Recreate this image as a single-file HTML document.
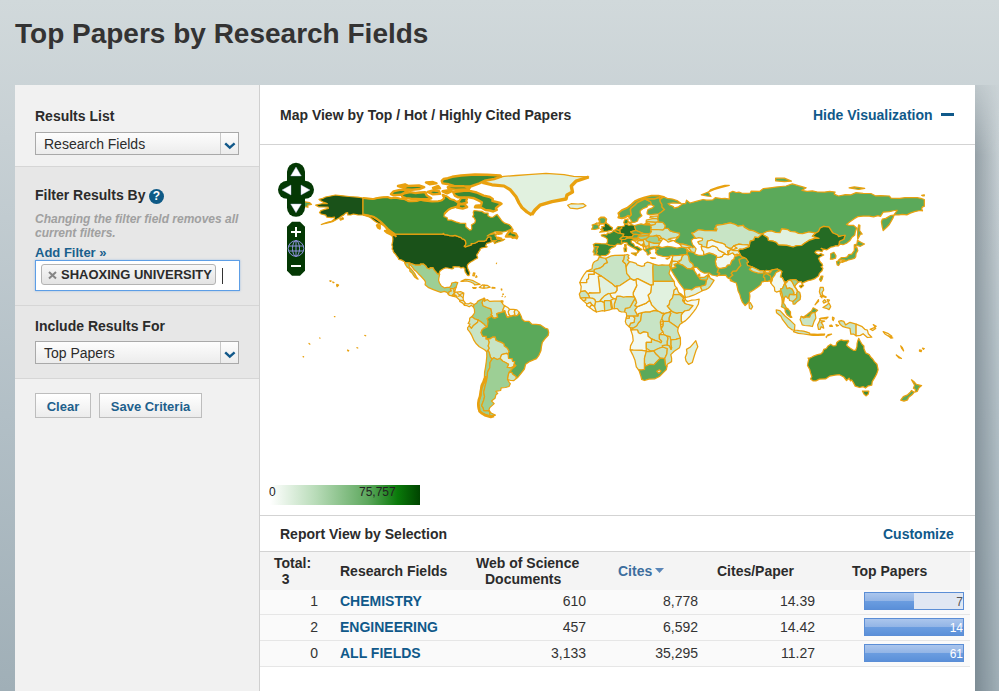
<!DOCTYPE html>
<html><head><meta charset="utf-8">
<style>
*{box-sizing:border-box;margin:0;padding:0}
html,body{width:999px;height:691px;overflow:hidden}
body{font-family:"Liberation Sans",sans-serif;color:#333;position:relative;
background:linear-gradient(180deg,#d1d9db 0%,#c7d0d4 20%,#b2bfc6 60%,#a0afb7 100%);}
.a{position:absolute;white-space:nowrap}
.b14{font:bold 14px/16px "Liberation Sans",sans-serif;color:#2b2b2b}
.r14{font:14px/16px "Liberation Sans",sans-serif;color:#333}
.lnk{color:#10598a}
.sel{position:absolute;width:204px;height:23px;border:1px solid #a9a9a9;
background:linear-gradient(#fdfdfd,#ececec)}
.sel span{position:absolute;left:8px;top:3px;font:14px/16px "Liberation Sans",sans-serif;color:#2b2b2b}
.sel i{position:absolute;left:184px;top:0;width:1px;height:21px;background:#c8c8c8}
.sel svg{position:absolute;left:188px;top:9px}
.btn{position:absolute;top:393px;height:25px;border:1px solid #bdbdbd;background:linear-gradient(#ffffff,#ececec);
font:bold 13px/16px "Liberation Sans",sans-serif;color:#1d5f8c;text-align:center;padding-top:5px}
.hl{position:absolute;left:260px;width:715px;height:1px;background:#d3d3d3}
.row{position:absolute;left:260px;width:710px;height:26px;background:#fafafa;border-bottom:1px solid #e6e6e6}
.num{position:absolute;text-align:right;width:120px;font:14px/16px "Liberation Sans",sans-serif;color:#333}
.bar{position:absolute;left:864px;width:100px;height:18px;border:1px solid #5b8ed6;background:#e0e7f3;overflow:hidden}
.bar b{position:absolute;left:0;top:0;bottom:0;background:linear-gradient(#abc6ed 0%,#93b5e6 48%,#6b9de0 50%,#5b90d9 100%)}
.bar span{position:absolute;right:0px;top:2px;font:12px/14px "Liberation Sans",sans-serif}
</style></head><body>
<div class="a" style="left:15px;top:18px;font:bold 28px/31px 'Liberation Sans',sans-serif;color:#333">Top Papers by Research Fields</div>
<div class="a" style="left:975px;top:85px;width:24px;height:606px;background:linear-gradient(90deg,rgba(60,75,85,.35),rgba(60,75,85,0) 100%);-webkit-mask-image:linear-gradient(180deg,rgba(0,0,0,.25) 0px,#000 70px)"></div>
<!-- sidebar -->
<div class="a" style="left:15px;top:85px;width:245px;height:606px;background:#f1f1f1;border-right:1px solid #d0d0d0"></div>
<div class="a" style="left:15px;top:166px;width:244px;height:1px;background:#d6d6d6"></div>
<div class="a" style="left:15px;top:167px;width:244px;height:138px;background:#e7e7e7"></div>
<div class="a" style="left:15px;top:305px;width:244px;height:1px;background:#d6d6d6"></div>
<div class="a" style="left:15px;top:306px;width:244px;height:72px;background:#e7e7e7"></div>
<div class="a" style="left:15px;top:378px;width:244px;height:1px;background:#d6d6d6"></div>

<div class="a b14" style="left:35px;top:108px">Results List</div>
<div class="sel" style="left:35px;top:132px"><span>Research Fields</span><i></i>
  <svg width="13" height="8" viewBox="0 0 13 8"><path d="M1.2 1.3 L5.8 5.6 L10.6 1.3" fill="none" stroke="#12598a" stroke-width="2.4"/></svg></div>

<div class="a b14" style="left:35px;top:187px">Filter Results By</div>
<div class="a" style="left:149px;top:189px;width:15px;height:15px;border-radius:50%;background:#0f5a86;color:#fff;font:bold 12px/15px 'Liberation Sans',sans-serif;text-align:center">?</div>
<div class="a" style="left:35px;top:212px;font:italic bold 12px/14px 'Liberation Sans',sans-serif;color:#a0a0a0">Changing the filter field removes all<br>current filters.</div>
<div class="a lnk" style="left:35px;top:245px;font:bold 13px/16px 'Liberation Sans',sans-serif;color:#19608d">Add Filter &raquo;</div>
<div class="a" style="left:35px;top:260px;width:205px;height:31px;border:1px solid #5d9ee6;background:#fff;box-shadow:0 0 2px rgba(90,150,220,.5)">
  <div class="a" style="left:5px;top:3px;width:175px;height:21px;border:1px solid #b3b3b3;border-radius:3px;background:linear-gradient(#f8f8f8,#e3e3e3)">
    <svg class="a" style="left:6px;top:6px" width="9" height="9"><path d="M1 1L8 7.5M8 1L1 7.5" stroke="#858585" stroke-width="2"/></svg>
    <span class="a" style="left:19px;top:2px;font:bold 13px/16px 'Liberation Sans',sans-serif;color:#2b2b2b">SHAOXING UNIVERSITY</span>
  </div>
  <div class="a" style="left:186px;top:7px;width:1px;height:16px;background:#333"></div>
</div>

<div class="a b14" style="left:35px;top:318px">Include Results For</div>
<div class="sel" style="left:35px;top:341px"><span>Top Papers</span><i></i>
  <svg width="13" height="8" viewBox="0 0 13 8"><path d="M1.2 1.3 L5.8 5.6 L10.6 1.3" fill="none" stroke="#12598a" stroke-width="2.4"/></svg></div>

<div class="btn" style="left:35px;width:56px">Clear</div>
<div class="btn" style="left:99px;width:103px">Save Criteria</div>

<!-- main panel -->
<div class="a" style="left:260px;top:85px;width:715px;height:606px;background:#fff"></div>
<div class="a b14" style="left:280px;top:107px">Map View by Top / Hot / Highly Cited Papers</div>
<div class="a b14 lnk" style="left:813px;top:107px">Hide Visualization</div>
<div class="a" style="left:941px;top:113px;width:13px;height:3px;background:#10598a"></div>
<div class="hl" style="top:144px"></div>
<div id="map" class="a" style="left:260px;top:145px;width:715px;height:370px"><svg width="715" height="370" style="position:absolute;left:0;top:0"><g stroke="#e9a10f" stroke-width="1.25" stroke-linejoin="round"><path fill="#e1f1df" stroke-width="1.3" d="M222.4 37.4 230.0 34.0 244.0 31.4 256.0 30.5 268.0 29.6 286.0 28.4 304.0 29.6 313.7 31.4 328.7 32.0 316.0 36.2 311.3 41.0 312.5 47.0 307.0 50.0 306.0 54.0 292.0 56.6 280.0 60.2 275.0 65.0 271.7 69.8 267.0 67.0 262.0 62.6 259.0 58.0 256.0 51.8 250.0 44.6 244.0 41.0 232.0 39.8Z"/><path fill="#1a5219" d="M131.5 90.1 134.2 90.5 134.9 89.1 183.1 89.1 183.1 88.4 183.8 88.6 184.2 89.6 187.0 89.8 189.6 90.7 192.9 90.8 195.0 90.3 201.1 92.7 201.7 93.4 202.5 94.0 203.4 94.1 205.3 95.5 206.0 98.5 205.3 100.3 204.3 101.3 205.5 101.8 207.9 101.0 210.0 100.4 211.6 99.7 211.1 98.7 214.1 98.5 216.3 97.5 217.9 96.4 219.0 96.1 224.6 96.1 225.3 95.5 226.0 95.4 226.8 93.8 227.2 93.1 228.6 91.9 230.3 92.0 231.0 92.4 231.0 94.8 232.2 95.9 232.4 96.4 230.7 97.1 228.9 97.8 226.8 98.3 226.1 99.7 225.6 100.8 227.2 101.7 226.3 102.2 223.9 102.5 221.1 103.2 220.2 103.8 220.0 105.2 218.6 106.7 218.3 107.8 216.9 109.5 216.7 110.2 217.6 112.5 217.4 113.2 215.1 114.2 213.4 115.5 211.1 116.7 209.3 117.9 207.6 119.7 207.2 121.4 207.9 123.7 208.8 125.8 209.7 128.0 209.3 130.0 208.6 130.7 207.6 130.5 206.5 128.9 205.2 126.8 204.8 125.1 205.0 123.7 203.1 122.3 201.0 123.0 199.2 121.8 196.6 121.8 194.8 121.6 192.9 121.9 193.6 123.5 192.0 123.9 189.6 123.5 187.8 123.0 185.6 122.8 183.8 123.5 181.7 124.7 180.0 126.1 179.3 127.5 179.6 129.4 177.4 128.9 175.6 126.6 174.2 125.1 173.0 122.8 170.5 122.6 169.3 124.0 166.9 123.0 166.0 121.2 163.4 119.1 160.4 119.1 160.4 120.0 155.3 120.0 148.9 117.9 144.8 117.9 144.5 116.7 142.6 115.6 141.2 114.9 138.7 114.4 138.2 112.8 136.4 110.7 135.4 109.0 134.5 108.3 133.3 106.7 133.1 105.2 132.1 104.1 132.6 101.7 131.9 99.9 132.6 96.9 132.9 94.0 132.6 92.0Z"/><path fill="#1a5219" d="M103.0 53.0 97.8 52.2 89.1 51.5 82.9 50.8 75.4 50.0 70.7 51.0 65.5 52.0 62.8 53.4 59.0 54.3 60.2 55.5 63.2 57.1 67.2 58.7 62.8 58.5 55.7 60.1 58.5 61.8 64.6 62.0 68.1 62.2 68.4 63.4 64.6 64.4 61.1 65.5 59.5 67.6 61.1 69.0 65.8 70.2 66.7 72.1 71.6 72.7 74.6 72.1 74.2 74.2 71.6 76.3 68.1 77.0 63.7 78.6 61.3 79.5 65.5 78.4 69.8 77.4 73.3 76.3 76.0 74.7 79.4 72.8 81.2 71.4 83.8 69.9 85.6 68.1 87.7 67.6 87.8 70.0 90.8 69.9 93.4 69.0 97.8 69.9 102.4 70.0 105.1 70.6 109.2 72.0 110.9 73.0 112.7 74.4 115.3 76.5 118.8 78.6 120.9 79.1 121.9 78.1 119.7 76.3 117.0 74.0 113.9 72.0 110.9 70.9 107.4 70.0 103.0 69.3ZM80.5 75.1 83.5 74.0 82.9 72.7 79.8 74.0Z"/><path fill="#3b8a37" d="M103.0 53.0 108.3 53.6 112.7 54.1 116.2 53.3 120.5 52.6 124.0 52.2 127.5 52.0 131.0 53.3 135.4 52.7 139.8 53.6 145.0 54.3 148.5 56.2 152.0 56.2 157.2 55.9 160.7 54.7 163.4 55.5 167.7 55.9 172.1 56.4 178.2 56.2 181.7 55.4 184.3 53.3 182.6 49.8 187.0 51.5 190.5 54.1 194.0 55.0 196.6 56.8 199.2 55.9 201.0 53.3 204.5 52.7 207.1 54.1 206.2 55.9 207.1 57.6 201.8 58.8 198.3 58.1 199.2 61.1 195.7 62.0 191.3 63.2 188.7 64.6 186.1 66.9 184.3 69.0 184.0 71.6 187.0 72.5 187.8 75.1 191.3 75.1 195.7 76.8 200.1 78.2 205.7 78.4 205.8 81.7 207.9 83.5 209.7 85.1 211.4 84.7 211.8 83.0 211.4 80.0 214.9 77.7 215.5 75.4 214.1 72.8 212.7 71.8 213.7 69.5 213.2 67.2 214.1 65.5 218.4 66.0 221.9 66.4 224.6 68.1 228.1 68.1 227.9 70.7 230.7 72.3 233.3 72.0 235.9 70.0 237.1 69.5 239.4 72.5 242.0 76.0 244.7 78.2 249.0 79.5 251.7 82.1 252.0 83.8 249.6 84.9 245.5 86.5 242.9 87.0 238.5 86.8 235.0 86.8 232.4 88.2 229.8 89.3 227.2 91.0 228.9 90.0 234.2 88.7 237.1 89.4 235.0 90.7 236.3 91.7 236.8 93.8 241.2 94.7 244.7 94.3 243.1 95.5 238.5 96.8 234.7 98.5 233.8 96.9 236.8 95.5 234.2 95.7 232.2 95.9 231.0 94.8 231.0 92.4 230.3 92.0 228.6 91.9 227.2 93.1 226.8 93.8 226.0 95.4 225.3 95.5 224.6 96.1 219.0 96.1 217.9 96.4 216.3 97.5 214.1 98.5 211.1 98.7 211.6 99.7 210.0 100.4 207.9 101.0 205.5 101.8 204.3 101.3 205.3 100.3 206.0 98.5 205.3 95.5 203.4 94.1 202.5 94.0 201.7 93.4 201.1 92.7 195.0 90.3 192.9 90.8 189.6 90.7 187.0 89.8 184.2 89.6 183.8 88.6 183.1 88.4 183.1 89.1 134.9 89.1 134.2 88.2 131.4 86.8 130.1 85.8 127.2 85.6 126.1 83.3 124.4 81.2 122.3 79.8 120.9 79.1 121.9 78.1 119.7 76.3 117.0 74.0 113.9 72.0 110.9 70.9 107.4 70.0 103.0 69.3Z"/><path fill="#3b8a37" stroke-width="2.4" d="M209.7 45.9 216.7 47.5 223.7 50.6 229.8 52.0 232.8 54.1 232.4 55.9 240.3 58.0 241.5 58.8 239.4 60.2 235.9 63.2 236.8 65.0 233.3 66.5 229.8 65.5 225.4 65.0 221.1 62.5 214.9 62.3 215.8 60.6 221.1 60.2 221.9 57.3 218.4 55.4 214.1 53.3 208.8 52.4 204.5 52.4 198.3 52.4 194.8 50.6 193.1 47.1 200.1 46.3 203.6 45.7ZM141.5 49.8 144.1 48.4 150.3 47.1 155.5 48.0 159.9 47.5 165.1 47.1 166.9 50.6 171.2 53.3 167.7 54.3 160.7 54.3 151.1 53.8 145.9 53.1 142.4 51.9ZM131.0 49.1 133.6 46.3 139.8 44.9 144.1 44.9 147.6 46.3 140.6 49.8 133.6 50.3ZM210.6 41.5 219.3 38.4 224.6 35.8 234.2 34.0 241.2 31.6 240.3 30.5 227.2 29.8 214.9 29.5 201.0 30.5 192.2 31.8 187.8 33.2 183.5 34.0 181.7 35.8 182.6 38.4 188.7 39.3 194.0 41.0 204.5 41.4ZM188.7 44.0 195.7 44.7 208.8 44.3 209.7 42.8 203.6 41.2 192.2 41.0 187.8 42.2ZM143.3 42.8 147.6 41.0 159.0 40.5 164.2 42.1 159.9 44.0 152.0 44.7 144.1 44.2ZM167.7 46.8 173.0 45.4 179.1 46.3 180.0 48.9 173.0 49.4ZM182.6 46.3 188.7 45.2 191.3 46.3 187.0 48.4ZM198.3 59.4 204.5 59.0 207.1 62.0 202.7 63.6 197.1 62.5ZM138.0 41.0 145.0 39.3 147.6 40.5 141.5 42.2ZM173.0 42.8 178.2 41.0 180.0 43.3 174.7 43.6ZM166.0 37.5 173.0 37.0 176.5 38.4 169.5 39.3ZM245.9 91.5 247.3 89.1 249.4 86.3 252.5 84.5 251.7 87.3 255.7 88.6 257.4 91.5 256.7 93.3 255.2 92.4 252.5 92.7 251.1 91.5ZM125.1 85.9 130.1 86.8 134.0 90.1 131.4 89.6 126.7 87.3ZM117.0 80.3 119.7 80.5 119.7 83.5 117.9 82.4ZM237.7 92.7 241.2 93.6 238.5 94.0ZM236.8 87.5 241.5 88.4 238.5 88.7Z"/><path fill="none" stroke-width="2.0" d="M103.0 53.0 108.3 53.6 112.7 54.1 116.2 53.3 120.5 52.6 124.0 52.2 127.5 52.0 131.0 53.3 135.4 52.7 139.8 53.6 145.0 54.3 148.5 56.2 152.0 56.2 157.2 55.9 160.7 54.7 163.4 55.5 167.7 55.9 172.1 56.4 178.2 56.2 181.7 55.4 184.3 53.3 182.6 49.8 187.0 51.5 190.5 54.1 194.0 55.0 196.6 56.8 199.2 55.9 201.0 53.3 204.5 52.7 207.1 54.1 206.2 55.9 207.1 57.6 201.8 58.8 198.3 58.1 199.2 61.1 195.7 62.0 191.3 63.2 188.7 64.6 186.1 66.9 184.3 69.0"/><path fill="#e1f1df" d="M307.6 60.2 311.1 58.7 318.1 59.0 323.3 58.7 326.0 60.8 323.3 62.3 317.2 63.9 310.2 63.2Z"/><path fill="#9dcf95" d="M144.8 117.9 148.9 117.9 155.3 120.0 160.4 120.0 160.4 119.1 163.4 119.1 166.0 121.2 166.9 123.0 169.3 124.0 170.5 122.6 173.0 122.8 174.2 125.1 175.6 126.6 177.4 128.9 179.6 129.4 178.9 132.8 178.6 135.4 179.5 138.0 181.4 141.0 183.5 142.2 184.3 142.9 187.3 142.4 189.6 142.4 191.3 140.1 191.7 138.0 195.7 137.1 197.8 137.5 196.6 140.6 196.1 142.9 195.2 142.4 193.8 143.6 190.5 143.6 190.5 144.6 191.5 146.0 189.2 146.7 188.4 149.4 187.0 147.4 184.3 146.4 180.8 147.3 177.4 146.2 173.3 144.6 168.6 142.7 165.1 139.8 165.5 136.8 164.2 134.9 160.7 131.0 158.3 128.7 156.4 126.6 154.1 124.7 152.4 122.3 150.3 120.0 148.9 119.3 149.4 122.3 151.1 124.0 152.9 126.1 154.6 128.4 156.4 131.9 158.1 134.2 156.7 133.6 154.6 131.9 153.4 130.1 152.0 128.0 149.9 126.3 149.7 124.0 147.3 122.3 145.5 119.7Z"/><path fill="#c8e4c5" d="M188.4 149.4 189.2 146.7 191.5 146.0 190.5 144.6 190.5 143.6 193.8 143.6 194.1 146.9 195.4 147.3 193.4 149.4 192.0 150.8 189.6 150.4Z"/><path fill="#e1f1df" d="M193.8 143.6 195.2 142.4 195.4 145.0 194.1 146.9Z"/><path fill="#e1f1df" d="M194.1 146.9 196.6 147.1 201.0 146.7 203.8 148.1 203.1 152.9 203.4 155.5 205.8 158.6 208.8 158.8 210.6 157.9 214.2 159.5 213.4 162.1 211.4 160.2 209.2 161.8 207.1 160.7 204.6 160.5 202.7 158.1 199.7 156.4 199.6 155.1 196.6 152.2 194.8 151.6 192.6 151.1 192.0 150.8 193.4 149.4 195.4 147.3Z"/><path fill="none" d="M193.4 149.4 196.1 150.4 196.6 152.2M192.6 151.1 194.8 150.2 196.1 150.4M203.1 152.9 200.6 150.6 197.5 151.5M199.7 155.1 203.2 155.7M204.6 160.5 204.8 158.1M196.6 147.1 199.2 149.9 201.8 148.7 203.9 148.7"/><path fill="#c8e4c5" d="M201.0 136.4 205.3 134.3 208.8 134.5 213.2 135.7 217.4 138.0 220.0 139.4 214.6 139.9 213.7 138.5 210.6 137.0 206.5 135.9 202.7 136.4Z"/><path fill="#f2f9f1" d="M219.3 142.5 222.3 139.9 224.2 140.1 224.0 143.1 222.3 143.1Z"/><path fill="#e1f1df" d="M224.2 140.1 227.2 140.3 230.2 142.2 227.2 142.9 224.0 143.1Z"/><path fill="#e1f1df" d="M212.7 142.5 216.2 142.7 215.3 143.4 213.5 143.4Z"/><path fill="#e1f1df" d="M232.1 142.4 234.9 142.5 234.9 143.2 232.1 143.2Z"/><path fill="#f2f9f1" d="M213.5 127.9 214.9 128.2 214.1 131.0 212.8 130.7ZM216.3 130.7 217.0 131.9 215.8 132.4Z"/><path fill="#1a5219" d="M76.8 139.4 78.6 140.1 77.2 141.7 76.7 140.5ZM72.8 137.0 74.0 137.5 73.2 137.5ZM69.8 135.9 71.1 135.9 70.7 136.4Z"/><path fill="#9dcf95" d="M214.2 159.5 216.7 158.1 217.6 156.4 219.8 155.1 222.8 153.9 224.2 153.0 224.9 154.1 223.2 155.3 222.1 157.6 223.0 160.7 227.0 162.5 231.0 163.9 231.9 168.6 231.0 169.8 232.4 170.9 228.4 173.0 227.2 173.8 228.1 176.4 227.2 182.0 225.8 181.3 223.7 178.9 220.9 176.8 218.1 174.9 214.9 174.0 211.8 171.6 213.2 170.0 214.6 167.7 214.4 164.2 213.4 162.1Z"/><path fill="#c8e4c5" d="M224.9 154.1 224.4 156.4 225.4 155.5 227.2 154.6 229.8 156.4 234.2 156.2 237.7 156.2 241.2 156.0 242.0 157.6 243.3 159.8 244.7 160.7 243.8 162.8 242.9 165.1 243.4 166.8 240.3 167.7 236.8 168.6 237.7 172.1 235.0 173.3 232.6 172.6 232.4 170.9 231.0 169.8 231.9 168.6 231.0 163.9 227.0 162.5 223.0 160.7 222.1 157.6 223.2 155.3Z"/><path fill="#f2f9f1" d="M244.7 160.7 248.2 162.8 249.6 164.4 248.3 166.8 249.0 169.5 250.8 171.4 247.3 172.4 245.5 168.6 244.7 165.6 243.4 166.8 242.9 165.1 243.8 162.8Z"/><path fill="#f2f9f1" d="M249.6 164.4 253.4 164.4 255.2 164.7 254.3 166.8 255.2 171.0 253.4 170.3 250.8 171.4 249.0 169.5 248.3 166.8Z"/><path fill="#e1f1df" d="M255.2 164.7 256.9 164.9 259.3 167.4 257.8 170.3 255.2 171.0 254.3 166.8Z"/><path fill="#c8e4c5" d="M209.7 173.3 209.5 176.1 208.1 178.5 210.0 179.1 209.2 180.8 211.4 183.4 213.2 180.8 217.6 177.3 218.1 174.9 214.9 174.0 211.8 171.6Z"/><path fill="#c8e4c5" d="M209.2 180.8 207.6 182.6 207.6 184.3 209.7 186.9 211.8 190.4 214.1 195.7 216.3 198.8 219.3 201.8 224.6 204.8 226.7 206.7 228.1 205.3 229.3 203.2 228.2 200.9 229.3 197.1 227.9 193.9 226.1 193.9 226.3 191.3 222.8 191.3 221.1 187.8 221.9 185.2 223.7 183.4 227.2 182.0 225.8 181.3 223.7 178.9 220.9 176.8 218.1 174.9 217.6 177.3 213.2 180.8 211.4 183.4Z"/><path fill="#5ba95a" d="M259.3 167.4 261.3 171.6 262.1 174.2 264.8 176.4 269.1 176.4 271.8 179.1 276.1 179.4 280.5 179.9 284.9 183.1 287.8 184.0 288.7 187.3 288.2 190.4 284.9 193.9 282.3 197.4 281.4 201.8 280.9 205.8 278.8 210.5 276.5 213.7 273.5 214.9 270.0 216.3 265.6 219.3 264.4 224.0 261.3 228.0 257.8 232.4 256.2 233.6 256.0 231.5 252.5 228.9 251.7 227.3 248.9 227.5 252.2 223.6 254.1 222.1 255.7 220.5 254.1 219.3 254.6 216.6 252.5 216.5 252.0 213.7 248.5 213.3 248.2 209.6 247.8 209.3 249.0 206.2 247.3 203.2 244.3 201.1 243.8 198.8 241.2 197.4 238.5 196.5 235.9 195.3 235.2 192.2 232.9 192.0 229.8 193.9 226.1 193.9 226.3 191.3 222.8 191.3 221.1 187.8 221.9 185.2 223.7 183.4 227.2 182.0 228.1 176.4 227.2 173.8 228.4 173.0 232.4 170.9 232.6 172.6 235.0 173.3 237.7 172.1 236.8 168.6 240.3 167.7 243.4 166.8 244.7 165.6 245.5 168.6 247.3 172.4 250.8 171.4 253.4 170.3 255.2 171.0 257.8 170.3Z"/><path fill="#c8e4c5" d="M227.9 193.9 229.8 193.9 232.9 192.0 235.2 192.2 235.9 195.3 238.5 196.5 241.2 197.4 243.8 198.8 244.3 201.1 247.3 203.2 249.0 206.2 247.8 209.3 246.4 208.4 241.7 209.6 240.1 213.5 237.1 214.5 233.8 212.8 232.1 214.2 230.3 212.1 229.3 207.9 228.1 205.3 229.3 203.2 228.2 200.9 229.3 197.1Z"/><path fill="#e1f1df" d="M247.8 209.3 248.2 209.6 248.5 213.3 252.0 213.7 252.5 216.5 254.6 216.6 254.1 219.3 253.8 221.5 250.8 222.8 247.1 222.4 248.5 219.3 245.5 217.5 242.9 216.3 240.1 213.5 241.7 209.6 246.4 208.4Z"/><path fill="#c8e4c5" d="M256.2 233.6 253.6 235.7 250.8 235.5 247.5 234.5 247.8 231.5 248.9 227.5 251.7 227.3 252.5 228.9 256.0 231.5Z"/><path fill="#9dcf95" d="M226.7 206.7 226.8 211.4 226.3 216.6 225.4 222.8 224.6 227.1 224.4 232.4 222.8 236.7 221.1 240.2 220.5 246.3 221.1 249.8 219.3 255.1 217.6 259.4 218.4 264.7 221.1 267.3 225.4 269.4 229.8 270.8 232.4 271.2 229.6 266.6 228.1 265.6 223.9 265.6 223.2 262.9 221.6 260.7 223.7 255.1 224.6 251.6 223.7 247.2 225.1 241.1 226.3 236.7 227.2 232.4 227.5 227.1 229.8 222.8 230.0 217.5 232.1 214.2 230.3 212.1 229.3 207.9 228.1 205.3Z"/><path fill="#9dcf95" d="M232.1 214.2 233.8 212.8 237.1 214.5 240.1 213.5 242.9 216.3 245.5 217.5 248.5 219.3 247.1 222.4 250.8 222.8 253.8 221.5 254.1 219.3 255.7 220.5 254.1 222.1 252.2 223.6 248.9 227.5 247.8 231.5 247.5 234.5 249.4 237.6 250.3 238.7 249.0 241.5 245.5 242.5 241.2 242.8 240.6 245.5 235.9 246.3 237.7 248.6 235.9 249.8 235.0 253.3 231.5 256.0 234.2 258.6 229.8 262.6 228.9 264.9 229.8 266.4 229.6 266.6 228.1 265.6 223.9 265.6 223.2 262.9 221.6 260.7 223.7 255.1 224.6 251.6 223.7 247.2 225.1 241.1 226.3 236.7 227.2 232.4 227.5 227.1 229.8 222.8 230.0 217.5ZM229.6 266.6 229.8 270.6 233.3 270.8 235.4 270.1 231.5 268.2Z"/><path fill="#e1f1df" d="M241.3 155.8 242.9 155.8 242.9 157.1 241.3 157.1Z"/><path fill="#c8e4c5" d="M339.2 112.1 345.7 113.4 346.6 115.3 347.5 117.7 344.5 118.8 343.1 120.9 339.8 123.2 334.3 124.5 334.3 126.3 326.5 126.3 328.6 125.4 332.1 123.7 332.4 120.5 333.3 117.9 334.7 116.5 337.7 115.1Z"/><path fill="#f2f9f1" d="M334.3 126.3 334.3 129.3 328.6 129.3 328.6 133.6 326.7 134.9 326.8 137.5 319.8 137.5 321.6 133.6 324.2 129.3 326.5 126.3Z"/><path fill="#c8e4c5" d="M345.7 113.4 351.3 110.9 354.8 110.4 364.6 110.2 363.9 114.4 362.7 116.2 365.5 118.8 366.2 121.9 366.7 128.4 369.7 131.9 370.5 133.6 360.0 140.6 356.9 141.1 355.3 141.7 351.7 138.4 341.2 131.0 334.3 127.0 334.3 124.5 339.8 123.2 343.1 120.9 344.5 118.8 347.5 117.7 346.6 115.3Z"/><path fill="#c8e4c5" d="M364.6 110.2 367.4 109.5 369.0 110.4 367.9 111.8 369.0 113.2 367.4 114.9 369.7 116.7 367.6 119.3 366.2 121.9 365.5 118.8 362.7 116.2 363.9 114.4Z"/><path fill="#e1f1df" d="M369.7 116.7 372.3 117.2 376.1 118.3 377.2 119.8 381.9 121.4 384.5 120.7 384.5 118.8 387.1 117.2 389.8 117.7 393.3 119.1 392.9 122.3 393.3 136.3 393.3 139.8 391.5 139.8 391.5 140.6 377.5 133.6 375.8 134.5 374.0 135.4 370.5 133.6 369.7 131.9 366.7 128.4 366.2 121.9 367.6 119.3Z"/><path fill="#9dcf95" d="M393.3 119.1 398.5 120.4 402.0 119.8 405.5 120.2 409.4 120.0 410.6 123.2 409.0 128.4 411.6 132.8 414.1 136.3 393.3 136.3 392.9 122.3Z"/><path fill="#e1f1df" d="M393.3 136.3 414.1 136.3 414.8 140.6 416.9 143.2 414.2 145.0 413.4 149.7 412.5 152.9 409.9 155.8 409.2 159.8 407.3 161.1 411.6 166.0 409.0 167.4 405.2 168.4 402.0 168.4 399.4 166.8 397.6 166.0 394.1 165.4 391.5 159.8 390.6 157.2 388.9 152.9 388.0 150.2 390.6 147.6 391.5 140.6 391.5 139.8 393.3 139.8Z"/><path fill="#e1f1df" d="M413.4 149.7 414.2 145.0 416.9 143.2 418.6 147.6 421.6 149.4 424.9 152.5 423.7 152.9 419.5 149.4Z"/><path fill="#c8e4c5" d="M413.4 149.7 419.5 149.4 423.7 152.9 422.6 155.5 424.7 158.1 426.5 159.0 433.1 160.7 429.1 165.1 424.7 166.0 422.8 167.7 419.5 167.7 416.9 168.4 412.5 166.8 411.6 166.0 407.3 161.1 409.2 159.8 409.9 155.8 412.5 152.9Z"/><path fill="#e1f1df" d="M423.7 152.9 424.9 152.5 425.4 154.6 424.4 155.5 422.6 155.5Z"/><path fill="#f2f9f1" d="M424.4 155.5 425.4 154.6 427.4 156.5 431.7 155.1 435.2 155.0 439.2 154.1 438.7 156.5 438.4 159.0 436.1 163.3 433.5 166.8 430.0 171.2 425.6 175.6 422.3 177.7 421.2 176.1 421.2 169.8 422.8 167.7 424.7 166.0 429.1 165.1 433.1 160.7 426.5 159.0 424.7 158.1Z"/><path fill="#c8e4c5" d="M422.3 177.7 419.8 179.6 418.1 182.9 415.5 181.0 409.0 176.4 409.0 173.0 410.8 168.2 409.0 167.4 411.6 166.0 412.5 166.8 416.9 168.4 419.5 167.7 422.8 167.7 421.2 169.8 421.2 176.1Z"/><path fill="#c8e4c5" d="M418.1 182.9 417.7 186.1 418.6 188.7 420.4 193.0 416.0 194.4 410.8 194.8 409.9 191.6 406.9 191.0 403.8 189.6 402.9 186.9 401.1 184.3 402.9 180.8 403.4 176.4 409.0 176.4 415.5 181.0Z"/><path fill="#c8e4c5" d="M403.4 176.4 409.0 176.4 409.0 173.0 410.8 168.2 409.0 167.4 405.2 168.4 402.9 170.3 401.7 173.8Z"/><path fill="#e1f1df" d="M400.3 177.1 403.4 176.4 402.9 178.9 400.3 179.6ZM400.3 179.6 402.9 178.9 402.9 180.8 401.1 182.6 400.6 179.9Z"/><path fill="#c8e4c5" d="M370.9 185.2 373.2 184.8 377.5 185.0 378.4 187.8 380.2 188.7 383.7 186.9 387.7 187.5 388.0 191.3 391.5 193.9 395.0 195.3 398.5 196.5 401.1 197.9 401.7 196.2 399.4 193.9 399.4 189.6 402.9 186.9 401.1 184.3 400.6 179.9 400.3 177.1 401.7 173.8 402.9 170.3 403.8 168.2 402.0 168.4 399.4 166.8 397.6 166.0 394.1 165.4 389.8 166.8 385.4 166.8 381.9 167.7 381.0 171.2 380.5 175.6 378.4 177.8 376.7 180.8 374.0 182.6 371.4 183.4Z"/><path fill="#c8e4c5" d="M369.1 181.7 371.4 183.4 374.0 182.6 376.7 180.8 378.4 177.8 380.5 175.6 381.0 171.2 381.9 167.7 378.4 168.6 377.9 170.9 374.9 170.9 372.6 170.9 374.7 173.0 374.0 177.3 370.5 178.2Z"/><path fill="#e1f1df" d="M366.2 173.0 369.3 173.0 369.3 170.9 372.6 170.9 374.7 173.0 374.0 177.3 370.5 178.2 369.1 181.7 366.2 179.1 365.3 176.4Z"/><path fill="#e1f1df" d="M366.2 173.0 369.3 173.0 369.3 170.9 366.7 170.9Z"/><path fill="#c8e4c5" d="M366.7 170.9 369.3 170.9 372.6 170.9 374.9 170.9 377.9 170.9 374.9 165.1 377.5 161.6 374.9 160.7 376.7 157.6 375.8 154.6 374.4 152.0 374.9 153.7 373.2 156.4 371.4 159.8 369.7 162.5 365.3 163.3 364.4 166.8 366.2 167.7Z"/><path fill="#f2f9f1" d="M374.9 165.1 377.9 170.9 378.4 168.6 381.9 167.7 385.4 166.8 389.8 166.8 394.1 165.4 397.6 166.0 391.5 159.8 390.6 157.2 389.4 155.5 386.3 158.1 381.9 159.8 377.5 161.6Z"/><path fill="#f2f9f1" d="M374.4 152.0 375.8 154.6 376.7 157.6 374.9 160.7 377.5 161.6 381.9 159.8 386.3 158.1 389.4 155.5 388.9 152.9 388.0 150.2 390.6 147.6 391.5 140.6 377.5 133.6 375.8 134.5 376.7 140.6 373.2 147.6 373.2 150.2Z"/><path fill="#c8e4c5" d="M354.3 163.7 354.3 159.0 355.9 154.3 356.9 151.1 360.0 151.1 363.5 152.0 367.0 151.5 371.4 151.6 374.4 152.0 374.9 153.7 373.2 156.4 371.4 159.8 369.7 162.5 365.3 163.3 364.4 166.8 361.8 167.0 359.2 166.1 357.4 163.7Z"/><path fill="#f2f9f1" d="M349.9 148.7 352.2 148.0 355.3 147.6 356.9 145.3 356.9 141.1 360.0 140.6 370.5 133.6 374.0 135.4 375.8 134.5 376.7 140.6 373.2 147.6 373.2 150.2 374.4 152.0 371.4 151.6 367.0 151.5 363.5 152.0 360.0 151.1 356.9 151.1 355.9 154.3 353.9 153.7 351.3 152.0Z"/><path fill="#e1f1df" d="M328.2 149.2 329.5 147.6 332.1 147.8 339.9 147.6 339.9 145.9 338.2 131.0 341.2 131.0 351.7 138.4 355.3 141.7 356.9 141.1 356.9 145.3 355.3 147.6 352.2 148.0 349.9 148.7 348.7 148.5 346.1 149.9 344.3 151.1 341.7 153.7 339.9 156.4 338.2 156.7 335.6 156.9 334.7 154.6 333.0 153.4 329.8 153.0Z"/><path fill="#f2f9f1" d="M319.8 137.5 326.8 137.5 326.7 134.9 328.6 133.6 328.6 129.3 334.3 129.3 334.3 127.0 341.2 131.0 338.2 131.0 339.9 145.9 339.9 147.6 332.1 147.8 329.5 147.6 328.2 149.2 325.1 145.9 320.7 146.6 321.2 141.5Z"/><path fill="#c8e4c5" d="M319.3 149.0 320.7 146.6 325.1 145.9 328.2 149.2 329.8 153.0 325.6 152.9 320.4 153.0Z"/><path fill="#e1f1df" d="M320.4 153.0 325.6 152.9 325.8 155.1 323.3 155.7Z"/><path fill="#e1f1df" d="M325.6 152.9 329.8 153.0 333.0 153.4 334.7 154.6 335.6 156.9 334.7 161.6 332.1 159.8 330.3 157.4 326.8 159.0 326.0 158.1 323.3 155.7 325.8 155.1Z"/><path fill="#f2f9f1" d="M326.8 159.0 330.3 157.4 331.6 159.8 329.5 162.6 326.5 160.5Z"/><path fill="#f2f9f1" d="M329.5 162.6 331.6 159.8 334.7 161.6 336.4 167.0 333.0 165.1Z"/><path fill="#e1f1df" d="M336.4 167.0 342.6 165.6 344.7 166.0 344.3 157.4 341.7 156.4 339.9 156.4 338.2 156.7 335.6 156.9 334.7 161.6Z"/><path fill="#e1f1df" d="M339.9 156.4 341.7 153.7 344.3 151.1 346.1 149.9 348.7 148.5 349.9 148.7 351.3 152.0 353.9 153.7 350.4 155.5 344.7 155.5 344.3 157.4 341.7 156.4Z"/><path fill="#c8e4c5" d="M344.7 166.0 349.6 164.9 351.7 164.0 350.4 155.5 344.7 155.5 344.3 157.4Z"/><path fill="#e1f1df" d="M351.7 164.0 354.3 163.7 354.3 159.0 355.9 154.3 353.9 153.7 350.4 155.5Z"/><path fill="none" d="M352.7 163.9 351.1 155.5"/><path fill="#f2f9f1" d="M370.2 204.9 373.2 205.1 381.9 205.3 386.3 206.2 386.3 197.4 391.5 197.4 391.5 193.9 388.0 191.3 387.7 187.5 383.7 186.9 380.2 188.7 378.4 187.8 377.5 185.0 373.2 184.8 370.9 185.2 372.6 190.4 373.2 195.7 370.5 200.9ZM370.5 182.6 372.3 183.1 371.4 184.7 370.5 184.3Z"/><path fill="#c8e4c5" d="M386.3 197.4 386.3 203.2 390.6 206.0 393.8 205.8 398.5 203.5 402.7 202.0 402.4 200.6 407.3 200.0 407.3 196.5 408.1 193.0 406.9 191.0 403.8 189.6 399.4 189.6 399.4 193.9 401.7 196.2 401.1 197.9 398.5 196.5 395.0 195.3 391.5 193.9 391.5 197.4Z"/><path fill="#e1f1df" d="M370.2 204.9 373.2 205.1 381.9 205.3 386.3 206.2 390.6 206.0 393.8 205.8 389.8 206.7 386.3 206.7 384.5 213.1 384.5 218.0 384.5 224.5 381.0 225.0 378.4 224.7 376.3 221.9 374.9 214.9 372.6 209.6Z"/><path fill="#c8e4c5" d="M384.5 213.1 386.3 206.7 389.8 206.7 393.8 205.8 395.9 208.8 400.3 213.1 396.8 216.6 394.1 219.6 389.8 219.3 385.9 221.0 384.5 218.0Z"/><path fill="#c8e4c5" d="M393.8 205.8 398.5 203.5 402.7 202.0 407.3 203.5 406.9 208.8 404.6 213.7 400.3 213.1 395.9 208.8Z"/><path fill="#c8e4c5" d="M420.4 193.0 416.0 194.4 410.8 194.8 410.8 200.0 411.6 202.7 411.1 204.4 409.5 200.9 407.3 200.0 402.4 200.6 402.7 202.0 407.3 203.5 406.9 208.8 404.6 213.7 405.5 220.1 406.9 221.5 407.3 219.3 411.6 216.6 411.6 213.1 410.8 209.6 414.2 206.2 419.5 202.7 420.5 199.2Z"/><path fill="#c8e4c5" d="M406.9 191.0 409.9 191.6 410.8 194.8 410.8 200.0 411.6 202.7 411.1 204.4 409.5 200.9 407.3 200.0 407.3 196.5 408.1 193.0Z"/><path fill="#5ba95a" d="M378.4 224.7 381.0 225.0 384.5 224.5 384.5 218.0 385.9 221.0 389.8 219.3 394.1 219.6 396.8 216.6 400.3 213.1 404.6 213.7 405.5 220.1 406.9 221.5 406.4 224.5 403.8 227.1 399.4 231.5 395.0 233.8 388.9 234.1 384.5 235.5 381.7 234.5 381.0 231.5 379.3 226.2Z"/><path fill="#e1f1df" d="M396.8 226.2 399.4 224.7 401.0 226.1 398.9 228.2Z"/><path fill="#e1f1df" d="M435.8 195.7 437.8 201.8 436.1 205.3 434.4 210.5 432.3 217.5 428.6 219.4 426.0 215.8 425.3 212.3 427.0 207.9 426.5 204.4 430.0 202.3 433.5 198.3Z"/><path fill="#3b8a37" d="M333.3 99.6 335.6 98.3 340.8 98.7 346.4 98.9 349.6 100.1 352.5 100.4 355.2 100.6 355.2 101.5 351.3 103.1 349.6 104.8 349.0 105.7 349.9 106.9 348.3 109.0 345.9 110.6 341.7 110.6 339.8 111.8 338.4 110.4 336.6 109.7 336.4 108.3 337.3 106.6 336.4 105.3 337.5 103.1 338.2 101.5 335.2 101.5 334.0 101.3Z"/><path fill="#5ba95a" d="M334.0 101.3 335.2 101.5 338.2 101.5 337.5 103.1 336.4 105.3 337.3 106.6 336.4 108.3 336.6 109.7 334.0 110.0 334.2 107.4 333.0 106.9 334.2 103.9Z"/><path fill="#3b8a37" d="M346.4 98.9 347.5 96.9 347.5 94.3 345.5 92.4 341.7 91.0 341.3 90.0 344.3 89.4 346.8 89.8 347.3 88.0 349.9 88.2 352.2 87.0 353.9 85.4 356.9 87.5 358.3 88.0 360.7 88.4 363.9 89.1 362.8 91.5 360.0 93.8 361.8 94.5 361.4 97.5 362.7 98.2 360.9 99.4 357.4 98.9 355.2 100.6 352.5 100.4 349.6 100.1ZM364.6 99.7 366.2 99.7 366.0 102.4 364.8 101.7Z"/><path fill="#256b24" d="M339.6 87.2 342.6 86.8 347.8 86.1 352.0 85.2 352.5 82.8 350.1 81.2 349.2 80.0 346.9 78.6 345.9 77.2 344.3 78.6 344.3 80.3 344.3 81.6 341.7 81.6 342.2 83.3 340.5 84.4 343.4 84.9Z"/><path fill="#5ba95a" stroke-width="1.7" d="M345.9 77.2 345.7 76.8 346.4 74.2 344.3 72.3 340.8 72.3 338.7 74.2 339.8 76.3 339.1 78.1 341.2 78.9 344.3 78.6Z"/><path fill="#5ba95a" d="M339.1 83.5 338.7 81.6 339.1 80.3 336.8 78.1 334.7 79.1 332.1 80.0 333.0 81.7 331.6 84.2 334.7 84.5Z"/><path fill="#c8e4c5" d="M339.1 80.3 339.9 79.3 339.1 78.2 336.8 78.1 335.9 79.5Z"/><path fill="#3b8a37" d="M355.5 84.9 357.4 82.3 358.3 81.6 361.8 81.6 361.8 83.5 360.0 84.2 360.0 85.9 359.7 85.9 357.4 84.9Z"/><path fill="#3b8a37" d="M353.9 85.4 355.5 84.9 357.4 84.9 359.7 85.9 360.7 86.8 359.7 88.2 358.3 88.0 356.9 87.5Z"/><path fill="#256b24" d="M360.0 84.2 361.8 83.5 361.8 81.6 364.4 81.0 364.6 78.8 366.3 78.9 368.8 80.3 371.4 79.6 374.4 80.5 374.7 81.7 375.1 82.8 375.8 85.4 370.7 86.8 373.7 89.4 372.3 91.7 367.9 92.0 366.2 91.5 362.8 91.5 363.9 89.1 360.7 88.4 360.2 87.2 360.0 85.9Z"/><path fill="#3b8a37" d="M363.7 77.7 364.6 74.9 368.1 73.9 367.9 76.0 368.8 76.8 367.0 78.6 366.3 78.9 364.6 78.8ZM368.8 77.4 371.6 76.8 371.1 78.6 368.8 78.1Z"/><path fill="#3b8a37" d="M360.0 93.8 362.8 91.5 366.2 91.5 367.9 92.9 365.3 94.3 361.8 94.5Z"/><path fill="#5ba95a" d="M366.2 91.5 367.9 92.0 372.3 91.7 373.7 89.4 375.8 89.1 379.3 89.8 378.4 91.7 377.5 93.1 373.2 93.4 367.9 92.9Z"/><path fill="#3b8a37" d="M362.7 98.2 361.4 97.5 361.8 94.5 365.3 94.3 367.9 92.9 373.2 93.4 373.5 95.0 371.1 95.5 371.4 97.8 373.5 98.7 374.9 101.3 377.5 101.7 381.9 104.5 379.3 105.7 378.6 106.7 377.0 108.3 377.9 106.0 376.7 104.8 374.4 103.4 371.1 101.8 367.9 99.7 367.0 97.8 364.4 97.3ZM371.4 108.1 376.8 107.8 376.0 110.6ZM363.9 102.9 366.7 102.9 366.3 106.4 364.4 106.6Z"/><path fill="#5ba95a" d="M374.4 80.5 381.0 78.9 384.0 79.6 390.6 80.0 391.3 82.6 390.6 84.7 391.5 86.5 389.4 89.1 382.8 88.4 378.4 86.5 375.8 85.4 375.1 82.8 374.7 81.7Z"/><path fill="#5ba95a" d="M370.7 86.8 375.8 85.4 378.4 86.5 382.8 88.4 379.3 89.8 375.8 89.1 373.7 89.4Z"/><path fill="#9dcf95" d="M379.3 89.8 382.8 88.4 389.4 89.1 388.9 90.3 381.9 91.2 379.3 90.8Z"/><path fill="#9dcf95" d="M377.5 93.1 378.4 91.7 379.3 90.8 381.9 91.2 388.9 90.3 389.4 91.2 386.3 93.8 382.8 94.5 380.2 94.5Z"/><path fill="#9dcf95" d="M385.1 94.1 386.3 93.8 389.4 91.2 392.9 91.2 396.2 90.3 398.9 92.6 398.9 95.2 401.5 95.7 399.6 98.3 394.1 98.3 388.9 96.9 387.1 96.4Z"/><path fill="#c8e4c5" d="M388.9 96.9 394.1 98.3 399.6 98.3 398.5 101.3 395.0 101.7 389.4 102.5 388.9 100.8Z"/><path fill="#5ba95a" d="M384.5 105.3 386.3 103.4 389.4 102.5 395.0 101.7 395.5 103.2 390.6 104.5 389.4 105.7 390.6 108.3 388.0 110.0 387.1 109.2 387.1 107.4 385.1 106.0ZM390.6 112.7 395.5 113.2 392.4 113.5Z"/><path fill="#9dcf95" d="M373.5 95.0 373.2 93.4 377.5 93.1 378.4 93.8 376.7 95.2Z"/><path fill="#c8e4c5" d="M373.2 95.5 373.5 95.0 376.7 95.2 378.4 93.8 380.2 94.5 382.8 94.5 383.5 95.7 378.4 95.7 377.2 97.5 380.2 99.6 381.9 100.4 379.3 99.2 376.7 98.0 374.9 96.1Z"/><path fill="#e1f1df" d="M377.2 97.5 378.4 95.7 383.5 95.7 383.8 97.8 381.9 100.4 380.2 99.6Z"/><path fill="#c8e4c5" d="M382.8 94.5 385.1 94.1 387.1 96.4 388.9 96.9 388.9 100.8 385.6 101.5 384.5 99.9 383.8 97.8 383.5 95.7Z"/><path fill="#e1f1df" d="M381.9 100.4 383.8 99.6 384.5 99.9 383.3 101.5Z"/><path fill="#e1f1df" d="M383.3 101.5 385.6 101.5 386.3 103.4 384.5 105.3 383.5 104.3Z"/><path fill="#e1f1df" d="M385.6 101.5 388.9 100.8 389.4 102.5 386.3 103.4Z"/><path fill="#5ba95a" stroke-width="1.9" d="M358.3 72.5 359.2 70.7 358.3 68.1 361.8 65.1 367.0 62.9 371.4 59.4 374.9 56.2 379.3 54.1 384.5 52.4 391.5 50.6 398.5 50.6 403.8 51.9 400.3 54.1 399.4 52.7 394.1 54.1 388.0 54.1 384.5 54.1 381.0 55.9 377.5 57.6 374.9 60.2 371.4 62.9 370.5 64.6 371.1 68.1 371.4 69.9 369.7 71.6 367.9 70.7 365.3 72.5 361.8 73.4Z"/><path fill="#5ba95a" d="M369.7 71.6 368.8 72.5 371.4 76.0 372.3 77.7 374.9 77.2 377.5 76.0 378.4 73.5 381.9 70.7 380.2 68.1 380.2 65.8 382.8 63.7 387.1 62.0 388.0 60.2 391.5 59.7 390.6 56.8 385.4 54.1 384.5 54.1 381.0 55.9 377.5 57.6 374.9 60.2 371.4 62.9 370.5 64.6 371.1 68.1 371.4 69.9Z"/><path fill="#5ba95a" d="M391.5 59.7 394.1 61.1 392.4 62.9 388.0 64.6 387.1 67.2 387.1 69.0 389.8 69.9 395.0 69.2 398.5 69.0 401.1 67.2 404.6 64.6 402.0 62.0 402.0 59.4 400.3 56.8 399.9 54.1 400.3 54.1 399.4 52.7 394.1 54.1 388.0 54.1 385.4 54.1 390.6 56.8Z"/><path fill="#c8e4c5" d="M390.6 71.3 398.5 70.9 397.6 74.0 393.3 73.4 389.8 72.5Z"/><path fill="#c8e4c5" d="M386.3 75.1 391.5 73.9 393.3 73.4 397.6 74.0 398.2 74.6 398.5 76.8 395.9 77.4 386.3 76.7Z"/><path fill="#c8e4c5" d="M386.3 76.7 395.9 77.4 395.0 79.5 391.5 80.3 390.6 80.0 389.4 79.6 389.4 78.8 386.3 78.1Z"/><path fill="#c8e4c5" d="M390.6 84.7 391.3 82.6 390.6 80.0 391.5 80.3 395.0 79.5 395.9 77.4 398.5 76.8 402.9 77.4 405.5 80.7 404.6 83.5 402.9 85.1 396.8 84.5 391.5 84.5Z"/><path fill="#c8e4c5" d="M389.4 89.1 391.5 86.5 390.6 84.7 391.5 84.5 396.8 84.5 402.9 85.1 404.6 83.5 408.1 83.3 409.9 85.6 412.5 86.6 416.0 87.5 419.5 88.2 419.5 90.8 416.5 92.6 410.8 93.4 408.1 94.3 413.4 95.5 408.1 97.1 406.4 95.4 402.9 93.4 401.5 95.7 398.9 95.2 398.9 92.6 396.2 90.3 392.9 91.2 389.4 91.2 388.9 90.3Z"/><path fill="#e1f1df" d="M396.2 90.3 398.9 92.6 398.9 95.2 400.3 93.4 402.0 93.4 399.4 90.5Z"/><path fill="#5ba95a" d="M395.0 101.7 398.5 101.3 402.0 102.7 407.3 101.3 412.5 102.0 416.9 103.2 422.1 102.2 425.6 102.9 427.9 105.3 427.4 107.8 427.0 109.7 423.9 109.9 419.5 110.4 414.2 110.7 412.8 111.8 412.1 110.4 409.0 111.4 406.4 111.6 402.9 111.3 400.3 110.6 397.6 110.0 395.5 107.8 396.4 105.7 395.4 104.8 398.5 103.9 395.9 103.9Z"/><path fill="#c8e4c5" d="M406.0 113.7 409.9 112.5 408.8 113.2 407.3 114.2Z"/><path fill="#5ba95a" d="M403.8 51.9 400.3 54.1 399.9 54.1 400.3 56.8 402.0 59.4 402.0 62.0 404.6 64.6 401.1 67.2 398.5 69.0 398.5 70.9 397.6 74.0 398.2 74.6 398.5 76.8 402.9 77.4 405.5 80.7 404.6 83.5 408.1 83.3 409.9 85.6 412.5 86.6 416.0 87.5 419.5 88.2 419.5 90.8 416.5 92.6 418.6 92.6 416.0 94.3 415.1 96.1 413.9 95.7 416.0 97.3 419.5 98.9 423.0 99.2 426.5 100.1 430.9 101.5 432.6 102.7 434.4 101.7 432.6 99.6 431.7 96.9 431.4 95.2 433.5 93.4 436.1 93.4 434.4 91.7 431.7 88.2 434.4 87.3 438.4 84.7 444.8 85.6 448.3 85.6 451.8 85.6 456.2 85.9 457.1 83.8 454.5 83.8 456.2 82.1 456.2 80.3 463.2 79.3 470.2 77.9 475.4 79.5 478.1 81.2 483.3 80.3 484.2 82.1 489.4 85.1 492.9 85.6 496.4 87.3 499.0 88.6 502.5 88.7 506.9 86.5 511.3 85.9 515.6 87.3 520.0 87.7 521.8 83.8 527.9 84.7 530.5 86.5 534.9 86.8 538.4 88.4 542.7 88.7 548.9 87.0 553.2 87.7 555.5 88.2 558.5 86.5 560.2 83.0 563.7 81.4 569.0 82.1 572.5 87.7 577.7 90.0 578.6 91.7 583.0 90.5 585.1 90.3 583.8 94.3 579.5 96.2 578.9 99.6 578.1 100.8 580.3 99.2 583.0 99.7 586.5 98.2 590.0 95.5 591.7 92.6 594.8 90.0 595.2 87.3 596.6 83.0 593.4 80.3 589.1 80.3 586.5 79.5 590.0 76.8 594.3 73.7 597.8 71.6 603.1 71.1 609.2 71.1 613.6 71.8 617.9 70.7 620.5 71.3 623.2 67.2 629.3 66.7 634.5 65.5 637.2 65.3 634.5 69.0 632.8 73.4 629.3 79.5 626.7 82.3 623.2 85.6 622.3 82.1 621.4 76.8 622.3 74.2 625.8 73.4 630.2 70.7 635.4 69.9 638.9 69.9 642.4 69.3 646.8 69.9 650.3 68.1 654.6 66.7 659.9 65.5 662.5 65.8 661.6 63.7 662.5 61.8 664.3 61.3 664.3 54.5 660.8 53.4 657.3 52.7 650.3 52.6 645.0 52.7 639.8 53.3 631.0 53.1 629.3 51.0 620.5 50.6 615.3 50.8 610.9 48.5 603.1 48.4 596.1 47.7 590.8 49.8 585.6 49.6 578.6 51.0 574.2 49.2 575.1 47.1 569.8 46.3 564.6 47.1 557.6 47.0 552.4 45.9 547.1 46.3 541.9 45.4 546.2 42.8 538.4 40.7 532.3 38.9 526.1 41.0 520.9 41.5 515.6 42.1 510.4 42.8 503.4 43.6 500.8 45.4 499.9 46.3 491.2 46.1 490.3 48.0 485.9 48.4 481.6 48.0 478.9 47.1 476.3 47.5 472.8 46.3 469.3 48.0 469.3 54.1 464.9 53.3 461.5 53.6 455.3 52.7 452.7 55.0 446.6 55.2 443.1 54.5 437.0 56.2 430.0 58.0 426.5 55.2 425.6 58.5 423.0 58.5 418.6 61.8 414.2 63.2 413.4 61.5 409.9 60.2 408.1 58.5 413.4 57.8 421.2 58.5 417.7 55.9 412.5 54.1 407.3 53.4ZM441.3 49.8 446.6 51.0 451.0 51.5 448.3 47.1 451.0 44.5 458.0 42.2 464.9 40.3 469.3 40.3 459.7 42.8 454.5 44.5 449.2 46.6 445.7 48.0ZM515.6 35.8 524.4 36.7 531.4 36.1 524.4 33.2 515.6 33.2ZM589.1 42.8 598.7 44.5 604.8 43.3 594.3 41.9ZM597.8 94.3 600.4 89.1 602.2 89.1 599.6 85.6 599.9 80.3 598.7 79.8 597.8 83.8 597.5 90.8ZM384.0 79.6 386.3 78.1 389.4 78.8 389.4 79.6ZM661.6 50.3 664.3 49.8 664.3 50.8 662.5 50.8ZM34.9 61.3 38.4 60.2 43.6 61.5 48.0 62.2 47.5 60.2 51.5 59.4 49.7 57.6 43.6 56.6 34.9 54.5ZM34.9 49.8 37.5 49.8 39.2 50.6 34.9 50.8Z"/><path fill="#c8e4c5" d="M436.1 93.4 434.4 91.7 431.7 88.2 434.4 87.3 438.4 84.7 444.8 85.6 448.3 85.6 451.8 85.6 456.2 85.9 457.1 83.8 454.5 83.8 456.2 82.1 456.2 80.3 463.2 79.3 470.2 77.9 475.4 79.5 478.1 81.2 483.3 80.3 484.2 82.1 489.4 85.1 492.9 85.6 496.4 87.3 499.0 88.6 502.5 88.7 498.2 92.6 494.7 92.2 493.8 95.2 490.3 96.1 489.4 100.4 487.7 99.9 482.4 99.6 478.9 99.2 473.7 100.8 471.9 103.1 469.3 103.4 465.8 101.5 464.9 99.6 462.3 98.3 456.2 96.9 451.8 95.0 447.5 96.1 446.6 102.5 442.2 101.3 441.3 101.8 441.9 99.9 439.2 99.2 437.8 96.9 439.6 96.1 442.2 95.5 442.6 93.4 438.7 92.6Z"/><path fill="#e1f1df" d="M502.5 88.7 506.9 86.5 511.3 85.9 515.6 87.3 520.0 87.7 521.8 83.8 527.9 84.7 530.5 86.5 534.9 86.8 538.4 88.4 542.7 88.7 548.9 87.0 553.2 87.7 555.5 88.2 552.4 91.2 556.7 92.6 559.0 93.4 555.0 93.3 548.9 95.4 544.5 98.3 541.9 100.3 536.6 100.6 533.1 102.0 527.0 100.4 518.3 99.9 516.5 97.5 513.0 96.1 508.3 95.5 507.8 92.6 503.4 90.0Z"/><path fill="#256b24" d="M478.1 105.7 479.8 103.9 482.4 104.1 485.1 103.1 489.4 101.3 489.4 100.4 490.3 96.1 493.8 95.2 494.7 92.2 498.2 92.6 502.5 88.7 503.4 90.0 507.8 92.6 508.3 95.5 513.0 96.1 516.5 97.5 518.3 99.9 527.0 100.4 533.1 102.0 536.6 100.6 541.9 100.3 544.5 98.3 548.9 95.4 555.0 93.3 559.0 93.4 556.7 92.6 552.4 91.2 555.5 88.2 558.5 86.5 560.2 83.0 563.7 81.4 569.0 82.1 572.5 87.7 577.7 90.0 578.6 91.7 583.0 90.5 585.1 90.3 583.8 94.3 579.5 96.2 578.9 99.6 578.1 100.8 576.0 100.6 573.3 101.7 570.7 102.2 566.9 104.8 562.9 103.9 561.1 103.4 563.4 104.3 562.0 106.6 558.5 105.7 555.9 106.2 555.0 107.4 557.3 109.2 558.5 109.7 560.8 108.6 563.7 110.0 560.2 111.8 558.5 113.5 560.2 117.0 562.0 118.8 562.7 120.7 561.1 121.8 562.9 123.2 562.0 125.8 559.4 128.4 558.5 131.0 555.0 133.6 551.5 134.9 548.0 135.7 544.5 137.1 541.9 138.4 541.3 136.6 538.4 137.0 536.1 134.9 534.0 134.5 530.5 135.0 527.9 135.6 527.0 137.1 524.4 137.1 522.3 132.8 520.4 131.9 521.8 126.6 520.0 125.2 517.4 124.0 512.2 124.9 509.5 125.8 504.8 127.0 503.8 125.9 499.9 125.8 495.5 123.5 492.0 121.9 487.7 120.5 486.8 117.9 488.5 117.0 485.9 113.5 481.6 111.8 480.2 109.5ZM539.4 141.1 542.7 139.6 543.6 140.6 541.0 142.9Z"/><path fill="#5ba95a" d="M559.5 134.5 561.1 131.0 562.9 131.0 562.0 134.5 560.8 136.4Z"/><path fill="#5ba95a" d="M573.9 107.3 576.0 110.9 575.6 113.2 572.5 114.2 570.4 114.2 570.7 111.8 570.7 108.8Z"/><path fill="#5ba95a" d="M578.4 115.3 581.2 112.7 585.6 112.3 587.3 111.8 588.7 109.7 591.7 109.2 594.3 105.7 594.3 102.7 596.9 102.4 597.8 105.7 596.1 108.3 595.7 111.8 594.3 113.5 591.7 114.2 588.7 114.8 585.9 116.2 583.0 114.8ZM576.5 116.5 579.5 115.3 580.3 117.4 578.6 120.5 577.2 120.0ZM581.2 117.0 584.7 114.9 584.7 116.5 582.1 117.4ZM594.3 102.2 596.9 100.4 600.4 101.3 604.5 99.0 601.3 97.5 597.5 95.2 596.9 99.0 594.3 99.9Z"/><path fill="#5ba95a" d="M469.3 133.6 471.9 135.4 470.2 135.7 476.3 138.0 477.2 141.5 478.1 145.9 479.8 149.4 480.7 152.9 482.4 157.2 485.1 160.5 486.8 159.0 489.2 156.7 489.9 151.1 489.4 147.6 493.8 145.0 497.3 142.4 500.8 139.8 501.7 137.1 504.3 136.3 505.2 136.3 504.8 132.8 503.4 131.9 504.3 129.3 506.6 128.7 510.4 131.0 510.9 133.6 512.2 135.4 512.5 133.1 514.8 130.1 516.0 127.5 519.1 126.1 517.4 124.0 512.2 124.9 510.4 127.7 506.6 127.9 504.8 127.0 503.8 125.9 503.4 127.9 498.2 128.0 492.9 126.5 489.4 124.4 492.0 121.9 487.7 120.5 486.8 117.9 488.5 117.0 485.9 113.5 484.2 112.7 481.6 113.5 478.9 114.4 479.8 117.9 480.7 120.5 478.9 122.3 476.3 125.8 472.8 126.1 471.1 128.4 472.8 130.1 469.8 132.4Z"/><path fill="#c8e4c5" d="M489.1 157.9 490.3 157.6 492.6 161.6 491.2 164.2 489.4 163.3 489.1 159.8Z"/><path fill="#5ba95a" d="M456.2 130.7 465.8 130.1 467.6 132.8 469.3 133.6 469.8 132.4 472.8 130.1 471.1 128.4 472.8 126.1 476.3 125.8 478.9 122.3 480.7 120.5 479.8 117.9 478.9 114.4 481.6 113.5 484.2 112.7 481.6 111.8 479.8 110.0 476.3 110.9 474.6 111.8 473.7 114.4 471.9 115.3 471.1 117.0 470.2 119.7 467.6 120.0 465.8 122.3 461.5 123.2 458.8 123.3 457.1 127.5 459.7 128.4 457.1 131.0Z"/><path fill="#f2f9f1" d="M457.1 122.6 458.8 123.3 461.5 123.2 465.8 122.3 467.6 120.0 470.2 119.7 471.1 117.0 471.9 115.3 473.7 114.4 474.6 111.8 476.3 110.9 479.8 110.0 477.2 109.2 474.6 110.0 472.8 107.8 468.4 109.7 465.8 109.3 463.2 109.5 462.3 111.3 459.7 112.1 456.6 112.5 455.3 116.2 455.9 119.7Z"/><path fill="#5ba95a" d="M426.5 105.9 429.1 106.7 430.9 106.7 433.5 107.4 435.2 109.2 438.7 110.4 443.1 110.2 445.7 109.2 449.2 107.9 453.6 109.2 456.6 110.9 456.6 112.5 455.3 116.2 455.9 119.7 457.1 122.6 458.8 123.3 457.1 127.5 459.7 128.4 457.1 131.0 451.8 130.0 449.2 127.9 446.6 128.0 444.0 128.0 440.5 126.1 438.4 124.0 437.0 122.3 434.4 122.3 433.5 121.4 432.6 118.8 430.0 117.0 429.1 115.3 428.8 112.7 428.2 110.4 426.5 109.2 427.4 107.8Z"/><path fill="#c8e4c5" d="M417.7 118.3 421.2 114.8 421.8 111.8 423.7 109.7 427.0 109.7 428.2 110.4 428.8 112.7 429.1 115.3 430.0 117.0 432.6 118.8 433.5 121.4 433.0 123.7 430.9 123.9 427.4 123.7 423.0 120.4Z"/><path fill="#e1f1df" d="M412.1 110.4 412.8 111.8 412.1 113.5 412.5 116.2 417.4 116.5 421.2 114.8 421.8 111.8 423.7 109.7 419.5 110.4 414.2 110.7Z"/><path fill="#9dcf95" d="M409.4 120.0 410.9 117.0 412.0 117.6 411.6 120.5 410.8 123.2Z"/><path fill="#c8e4c5" d="M410.9 117.0 412.1 113.5 412.5 116.2 412.0 117.6Z"/><path fill="#e1f1df" d="M411.6 120.5 412.0 117.6 412.5 116.2 417.4 116.5 417.7 118.3 414.2 119.7 416.0 122.3 413.4 123.2 410.8 123.2Z"/><path fill="#5ba95a" d="M410.6 123.2 413.4 123.2 416.0 122.3 414.2 119.7 417.7 118.3 423.0 120.4 427.4 123.7 430.9 123.9 433.0 123.7 434.4 125.8 436.1 128.4 437.3 130.1 438.4 131.5 440.5 134.5 446.6 135.0 445.7 139.8 440.5 141.5 435.2 142.4 431.7 145.0 430.0 144.5 425.6 144.3 424.4 145.9 423.9 144.1 421.2 140.6 418.6 137.1 417.7 135.4 416.0 132.8 414.2 130.1 411.6 125.8Z"/><path fill="#e1f1df" d="M424.4 145.9 425.6 144.3 430.0 144.5 431.7 145.0 435.2 142.4 440.5 141.5 442.2 145.7 440.5 146.7 436.1 149.0 433.5 150.2 429.1 151.6 425.6 152.5 424.7 150.2Z"/><path fill="#c8e4c5" d="M446.6 135.0 447.8 132.8 448.3 128.6 450.1 133.1 454.1 135.4 451.8 138.9 450.1 141.5 448.3 143.2 445.7 144.6 442.2 145.7 440.5 141.5 445.7 139.8Z"/><path fill="#9dcf95" d="M439.6 132.4 444.0 132.4 447.5 130.1 447.8 132.8 446.6 135.0 440.5 134.5Z"/><path fill="#9dcf95" d="M438.4 131.5 439.8 131.0 439.6 129.1 438.7 129.3Z"/><path fill="#c8e4c5" d="M430.9 123.9 433.0 123.7 434.2 124.9 433.5 122.3 432.6 122.1Z"/><path fill="#f2f9f1" d="M441.9 104.8 441.3 101.8 442.2 101.3 446.6 102.5 449.2 102.5 452.7 100.8 454.5 101.3 457.1 102.5 458.8 105.3 461.5 106.6 464.1 107.9 465.8 109.3 463.2 109.5 462.3 111.3 459.7 112.1 456.6 112.5 456.6 110.9 453.6 109.2 449.2 107.9 445.7 109.2 443.6 109.5 443.6 106.6Z"/><path fill="#f2f9f1" d="M446.6 102.5 447.5 96.1 451.8 95.0 456.2 96.9 462.3 98.3 464.9 99.6 465.8 101.5 469.3 103.4 471.9 103.1 473.7 100.8 477.2 103.2 473.7 104.5 471.1 103.9 469.3 105.7 467.6 106.2 468.1 109.7 465.8 109.3 464.1 107.9 461.5 106.6 458.8 105.3 457.1 102.5 454.5 101.3 452.7 100.8 449.2 102.5Z"/><path fill="#e1f1df" d="M473.7 100.8 478.9 99.2 482.4 99.6 487.7 99.9 489.4 101.3 485.1 103.1 482.4 104.1 479.8 103.9 478.1 105.7 473.7 105.7 471.1 104.6 473.7 104.5 477.2 103.2Z"/><path fill="#e1f1df" d="M468.1 109.7 469.3 105.7 471.1 104.6 473.7 105.7 478.1 105.7 480.2 109.5 479.8 110.0 477.2 109.2 474.6 110.0 472.8 107.8 468.4 109.7Z"/><path fill="#c8e4c5" d="M419.5 98.9 423.0 99.2 426.5 100.1 430.9 101.5 430.0 102.7 425.6 102.9 422.1 102.2Z"/><path fill="#e1f1df" d="M425.6 102.9 428.2 102.5 430.9 105.7 429.1 106.7 427.9 105.3Z"/><path fill="#c8e4c5" d="M428.2 102.5 430.0 102.7 430.9 101.5 432.6 102.7 434.4 101.7 436.1 103.9 434.9 107.6 433.5 107.4 430.9 106.7 430.9 105.7Z"/><path fill="#c8e4c5" d="M489.4 124.4 492.9 126.5 498.2 128.0 503.4 127.9 503.8 125.9 499.9 125.8 495.5 123.5 492.0 121.9Z"/><path fill="#e1f1df" d="M504.8 127.0 506.6 127.9 510.4 127.7 509.5 125.8 506.0 125.4Z"/><path fill="#5ba95a" d="M505.2 136.3 507.8 136.3 510.1 135.4 510.9 138.0 511.3 135.4 510.9 133.6 510.4 131.0 506.6 128.7 504.3 129.3 503.4 131.9 504.8 132.8Z"/><path fill="#f2f9f1" d="M510.9 138.0 512.2 139.8 514.4 142.4 514.8 145.9 516.5 147.1 520.0 145.9 520.5 149.4 521.8 152.9 522.3 157.2 523.5 154.1 522.6 151.1 521.8 147.6 520.5 144.1 522.6 143.2 524.4 138.9 526.5 137.1 524.4 137.1 522.3 132.8 520.4 131.9 521.8 126.6 520.0 125.2 519.1 126.1 516.0 127.5 514.8 130.1 512.5 133.1 512.2 135.4Z"/><path fill="#9dcf95" d="M520.5 144.1 521.8 147.6 522.6 151.1 523.5 154.1 522.3 157.2 521.8 160.7 521.4 161.6 524.4 163.3 526.1 164.2 527.9 163.9 526.1 162.5 524.9 159.8 523.5 158.1 524.4 152.9 525.8 151.1 527.9 153.4 528.8 152.9 529.6 149.4 533.1 149.4 534.0 147.6 532.3 144.1 529.6 142.7 527.0 143.6 526.1 140.6 525.3 139.2 524.4 138.9 522.6 143.2Z"/><path fill="#e1f1df" d="M524.4 137.1 527.0 137.1 527.9 135.6 530.5 135.0 532.3 137.1 534.0 140.6 535.8 143.2 537.5 145.9 536.6 149.4 534.0 149.9 534.0 147.6 532.3 144.1 529.6 142.7 527.0 143.6 526.1 140.6 525.3 139.2 526.5 137.1Z"/><path fill="#9dcf95" d="M530.5 135.0 534.0 134.5 536.1 134.9 538.4 137.0 535.8 139.8 534.5 141.5 535.8 143.2 537.5 145.9 539.8 147.6 540.6 151.1 540.1 154.6 537.5 156.4 534.9 159.0 533.1 159.0 532.8 156.4 534.9 154.6 536.6 152.9 536.6 149.4 537.5 145.9 535.8 143.2 534.0 140.6 532.3 137.1Z"/><path fill="#c8e4c5" d="M528.8 152.9 529.6 155.5 532.8 156.4 534.9 154.6 536.6 152.9 536.6 149.4 534.0 149.9 529.6 149.4Z"/><path fill="#5ba95a" d="M524.9 163.3 526.1 164.2 527.9 163.9 530.5 166.8 530.5 170.3 531.9 172.3 530.5 172.4 527.0 169.8 525.3 166.8ZM541.2 171.4 543.6 172.1 547.1 169.5 551.5 166.0 553.2 162.8 557.6 165.3 555.9 166.8 555.0 167.5 552.4 167.7 550.6 169.5 549.7 172.1 546.2 172.1 543.6 173.0Z"/><path fill="#c8e4c5" d="M516.2 164.9 520.0 165.6 525.3 171.2 530.5 175.6 534.9 179.9 534.5 184.8 532.3 185.0 527.9 181.7 525.3 178.2 522.6 174.7 520.9 171.2 516.5 167.7ZM533.5 186.6 534.9 185.0 539.3 185.7 543.6 186.1 546.2 186.8 549.7 188.2 549.7 189.9 543.6 189.0 538.4 188.3 534.0 186.9ZM540.1 174.7 541.2 171.4 543.6 173.0 546.2 172.1 549.7 172.1 550.6 169.5 552.4 167.7 555.0 167.5 555.9 173.0 555.0 174.7 554.1 176.4 553.2 179.1 552.4 181.5 549.7 180.8 544.5 180.5 542.2 179.8 541.0 176.4ZM558.5 184.3 560.2 184.3 561.1 181.7 563.7 183.1 562.9 179.9 561.1 177.3 564.6 176.1 561.1 175.6 559.4 173.8 562.0 173.0 568.1 172.1 566.3 173.8 560.2 173.3 559.4 176.4 557.6 179.9ZM578.6 176.4 581.2 175.6 583.8 176.4 585.6 179.9 590.0 177.3 596.1 179.2 596.1 190.8 593.4 189.0 590.8 189.2 590.0 183.4 586.5 182.6 583.0 181.7 580.3 179.6ZM550.6 189.2 554.1 189.2 557.6 189.4 561.1 189.2 564.6 189.0 564.3 190.1 557.6 190.3 553.2 190.3 550.6 190.1ZM566.3 191.3 571.6 189.2 568.1 189.6 566.3 192.5ZM572.5 172.1 574.2 173.0 573.3 175.6 572.5 174.7ZM569.8 180.3 571.6 180.1 572.5 181.3 569.8 181.3ZM576.0 179.6 578.6 180.5 576.8 181.2Z"/><path fill="#f2f9f1" d="M596.1 179.2 602.2 181.7 604.8 184.3 607.4 185.2 608.3 188.7 611.8 192.2 607.4 192.5 603.1 188.7 600.4 190.4 596.1 190.8ZM610.1 184.3 614.4 182.6 615.7 183.4 612.7 185.5ZM613.2 179.6 616.2 181.3 615.3 182.0Z"/><path fill="#c8e4c5" d="M559.4 146.7 560.2 142.4 563.2 142.4 563.7 145.0 562.0 147.6 562.9 150.2 566.3 152.0 565.5 152.5 562.0 151.1 560.2 149.4ZM562.9 162.5 566.3 160.4 569.0 158.1 570.7 161.6 569.0 164.6 566.3 163.3ZM562.9 156.4 564.6 154.6 566.3 156.9 563.7 158.1ZM567.2 154.6 569.5 155.1 568.1 157.2ZM555.0 159.8 558.5 156.4 558.5 154.6ZM562.0 152.9 561.6 151.5 560.2 151.1Z"/><path fill="#f2f9f1" d="M623.2 186.6 628.4 188.7 631.9 191.3 630.2 192.2 624.9 189.0ZM628.4 190.8 632.8 193.0 631.0 193.2Z"/><path fill="#f2f9f1" d="M640.7 200.9 642.4 202.7 643.6 205.8 641.5 203.0Z"/><path fill="#f2f9f1" d="M636.3 210.0 641.5 213.5 638.9 212.8Z"/><path fill="#f2f9f1" d="M659.5 204.9 661.6 205.3 661.1 206.7 659.5 206.2ZM662.5 203.2 664.3 203.5 663.4 204.4Z"/><path fill="#f2f9f1" d="M87.5 205.1 88.7 205.5 88.2 206.0ZM96.9 202.7 97.8 203.0ZM104.8 190.4 105.7 190.8ZM49.0 198.5 49.9 199.2ZM43.1 211.6 43.6 211.9ZM59.7 192.9 60.0 193.2ZM74.4 171.6 74.9 171.7Z"/><path fill="#3b8a37" d="M548.0 213.1 548.9 214.0 548.0 217.5 547.5 220.5 549.7 224.5 550.6 228.0 551.8 231.5 550.6 234.1 553.2 235.9 555.9 235.9 559.4 234.1 565.5 233.9 569.8 231.1 575.1 230.1 579.5 229.7 583.8 232.0 586.5 235.5 589.1 233.2 590.5 235.9 591.7 235.0 593.4 237.6 595.2 241.1 599.6 242.5 603.1 241.6 605.5 243.0 608.3 240.8 611.8 240.2 612.2 236.7 614.4 233.2 616.7 228.9 618.1 224.7 617.0 219.3 614.4 216.6 612.7 214.0 610.9 212.3 609.2 209.6 605.7 207.9 603.9 203.5 603.9 200.9 602.2 199.5 600.4 196.5 598.7 193.4 597.8 195.7 597.1 198.3 596.9 201.8 595.7 205.3 593.4 205.3 590.0 203.0 587.3 200.9 586.5 200.0 588.7 196.2 588.2 195.3 583.8 195.7 581.2 194.8 578.6 196.0 576.8 197.4 576.0 200.6 573.3 200.9 570.7 199.2 568.1 200.9 566.3 203.5 563.7 204.4 562.9 207.0 561.1 208.8 557.6 209.6 554.1 210.9 551.5 212.3 549.7 213.1ZM602.4 246.0 608.8 246.2 608.3 249.0 606.2 250.9 603.9 249.0Z"/><path fill="#5ba95a" d="M651.5 234.8 654.6 237.3 656.4 239.4 661.6 240.6 659.0 242.8 657.3 246.3 655.2 247.0 655.5 244.6 653.4 243.2 654.6 240.2ZM651.5 245.5 654.3 247.2 652.0 249.8 648.5 252.5 647.6 254.9 644.0 256.1 640.7 255.1 643.3 251.6 647.6 249.8 650.3 247.2Z"/><path fill="none" stroke-width="3.2" d="M222.4 37.4 232.0 39.8 244.0 41.0 250.0 44.6 256.0 51.8 259.0 58.0 262.0 62.6 267.0 67.0 271.7 69.8"/><path fill="none" stroke-width="3.4" d="M328.7 32.0 316.0 36.2 311.3 41.0 312.5 47.0 307.0 50.0 306.0 54.0 292.0 56.6 280.0 60.2 275.0 65.0 271.7 69.8"/><path fill="none" stroke-width="2.2" d="M103.3 69.5 108.0 70.5 113.2 71.7 117.0 74.0 120.4 76.6 124.0 80.0 127.6 83.8 131.0 86.5 134.8 89.7 136.2 92.0"/><path fill="none" stroke-width="1.6" d="M241.3 143.5 241.8 145.5M242.8 148.5 243.3 150.0M244.8 151.5 245.5 152.3M242.0 151.0 242.6 151.8M236.0 118.2 237.0 118.6"/><path fill="none" stroke-width="2.6" d="M225.5 231.0 224.8 235.8 222.5 240.0 221.3 243.6 220.5 248.0 220.0 251.5 218.8 255.0 218.3 258.4 218.8 262.0 219.5 266.2 222.0 268.5 225.6 270.6 230.8 271.9 234.0 271.0"/></g></svg></div>
<svg class="a" style="left:275px;top:160px" width="40" height="120" viewBox="275 160 40 120">
<g fill="#043804">
<rect x="287" y="162.8" width="18" height="54" rx="9"/>
<rect x="278" y="180.8" width="36" height="18" rx="9"/>
<path d="M292 221.8 H300 L305 226.8 V270.8 L300 275.8 H292 L287 270.8 V226.8 Z"/>
</g>
<g fill="#fff" stroke="#b8b8f0" stroke-width="0.4">
<path d="M296 167 L301.3 176 H290.7 Z"/>
<path d="M282 190 L291 185 V195 Z"/>
<path d="M310 190 L301 185 V195 Z"/>
<path d="M296 212.7 L301.3 204 H290.7 Z"/>
</g>
<g fill="#fff"><rect x="291" y="231" width="10" height="2"/><rect x="295" y="227" width="2" height="10"/><rect x="291" y="265" width="10" height="2"/></g>
<g fill="none" stroke="#9a9af0" stroke-width="0.9">
<circle cx="296" cy="248.5" r="7.8"/>
<ellipse cx="296" cy="248.5" rx="3.5" ry="7.8"/>
<path d="M288.5 246 H303.5 M288.5 251 H303.5 M296 240.7 V256.3"/>
</g>
</svg>

<div class="a" style="left:270px;top:485px;width:150px;height:20px;background:linear-gradient(90deg,#ffffff 0%,#b9dcb9 30%,#5ea85e 65%,#0a7a0a 85%,#004400 100%)">
  <span class="a" style="left:-1px;top:0px;font:12px/14px 'Liberation Sans',sans-serif;color:#222">0</span>
  <span class="a" style="left:89px;top:0px;font:12px/14px 'Liberation Sans',sans-serif;color:#222">75,757</span>
</div>
<div class="hl" style="top:515px"></div>
<div class="a b14" style="left:280px;top:526px">Report View by Selection</div>
<div class="a b14 lnk" style="left:883px;top:526px">Customize</div>
<div class="hl" style="top:551px"></div>

<div class="a" style="left:260px;top:552px;width:710px;height:38px;background:#f4f4f4"></div>
<div class="a b14" style="left:274px;top:555px;line-height:16px">Total:<br>&nbsp;&nbsp;3</div>
<div class="a b14" style="left:340px;top:563px">Research Fields</div>
<div class="a b14" style="left:476px;top:555px">Web of Science</div>
<div class="a b14" style="left:485px;top:571px">Documents</div>
<div class="a b14" style="left:618px;top:563px;color:#3d6e9e">Cites</div>
<svg class="a" style="left:655px;top:568px" width="9" height="5"><path d="M0 0H9L4.5 5Z" fill="#5a86b8"/></svg>
<div class="a b14" style="left:717px;top:563px">Cites/Paper</div>
<div class="a b14" style="left:852px;top:563px">Top Papers</div>

<div class="row" style="top:590px;height:25px"></div>
<div class="row" style="top:615px"></div>
<div class="row" style="top:641px"></div>

<div class="num" style="left:198px;top:593px">1</div>
<div class="a b14 lnk" style="left:340px;top:593px">CHEMISTRY</div>
<div class="num" style="left:466px;top:593px">610</div>
<div class="num" style="left:578px;top:593px">8,778</div>
<div class="num" style="left:695px;top:593px">14.39</div>
<div class="bar" style="top:592px"><b style="width:49px"></b><span style="color:#555">7</span></div>

<div class="num" style="left:198px;top:619px">2</div>
<div class="a b14 lnk" style="left:340px;top:619px">ENGINEERING</div>
<div class="num" style="left:466px;top:619px">457</div>
<div class="num" style="left:578px;top:619px">6,592</div>
<div class="num" style="left:695px;top:619px">14.42</div>
<div class="bar" style="top:618px"><b style="width:100px"></b><span style="color:#fff">14</span></div>

<div class="num" style="left:198px;top:645px">0</div>
<div class="a b14 lnk" style="left:340px;top:645px">ALL FIELDS</div>
<div class="num" style="left:466px;top:645px">3,133</div>
<div class="num" style="left:578px;top:645px">35,295</div>
<div class="num" style="left:695px;top:645px">11.27</div>
<div class="bar" style="top:644px"><b style="width:100px"></b><span style="color:#fff">61</span></div>
</body></html>
